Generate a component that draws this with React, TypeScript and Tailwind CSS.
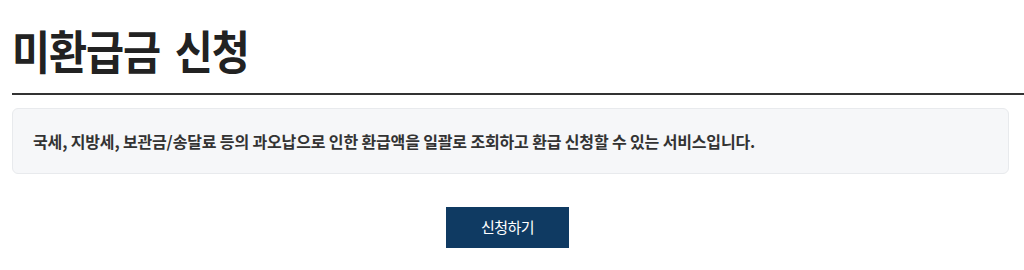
export default function App() {
  return (
    <div
      className="w-[1024px] h-[270px] bg-white pl-3 pt-[21px]"
      style={{ fontFamily: '"Noto Sans CJK KR", "Noto Sans", sans-serif' }}
    >
      <h1 className="text-[46px] leading-[56px] font-bold text-[#222]">
        <span className="inline-block origin-left scale-x-[0.9] tracking-[-1.2px] [word-spacing:7px] whitespace-nowrap">
          미환급금 신청
        </span>
      </h1>
      <div className="mt-[16px] h-[2px] bg-[#333]" />
      <div className="mt-[13px] mr-[15px] h-[66px] rounded-md border border-[#e8eaed] bg-[#f6f7f9] flex items-center pl-[20px]">
        <p className="text-[16px] font-bold text-[#333] tracking-[-0.15px]">
          국세, 지방세, 보관금/송달료 등의 과오납으로 인한 환급액을 일괄로 조회하고 환급 신청할 수 있는 서비스입니다.
        </p>
      </div>
      <div className="mt-[33px] flex justify-center pr-[21px]">
        <button className="w-[123px] h-[41px] bg-[#0f3a62] text-white text-[15px] tracking-[-0.5px]">신청하기</button>
      </div>
    </div>
  );
}
